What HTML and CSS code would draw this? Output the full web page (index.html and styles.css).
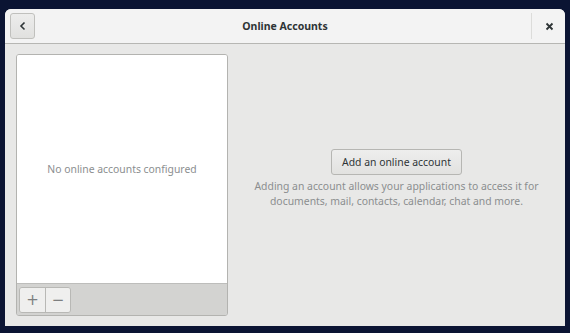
FILE: index.html
```html
<!DOCTYPE html>
<html>
<head>
    <title>Online Accounts</title>
    <link rel="stylesheet" href="styles.css">
</head>
<body>
    <div class="window">
        <div class="header">
            <button class="back-btn">
                <svg width="10" height="10" viewBox="0 0 10 10"><path d="M6.5 1.5 L3 5 L6.5 8.5" fill="none" stroke="#2e3436" stroke-width="1.6"/></svg>
            </button>
            <h1 class="title">Online Accounts</h1>
            <div class="sep"></div>
            <button class="close-btn">
                <svg width="9" height="9" viewBox="0 0 9 9"><path d="M1.5 1.5 L7.5 7.5 M7.5 1.5 L1.5 7.5" fill="none" stroke="#2e3436" stroke-width="1.8"/></svg>
            </button>
        </div>
        <div class="content">
            <div class="list-panel">
                <div class="list-body">
                    <p class="empty">No online accounts configured</p>
                </div>
                <div class="toolbar">
                    <div class="btn-group">
                        <button class="tool-btn">+</button>
                        <button class="tool-btn">&minus;</button>
                    </div>
                </div>
            </div>
            <div class="side">
                <button class="add-btn">Add an online account</button>
                <p class="desc">Adding an account allows your applications to access it for<br>documents, mail, contacts, calendar, chat and more.</p>
            </div>
        </div>
    </div>
</body>
</html>
```

FILE: styles.css
```css
body {
    margin: 0;
    padding: 9px 5px 7px;
    font-family: 'Noto Sans', 'DejaVu Sans', sans-serif;
    background: #0b1433;
    overflow: hidden;
}

.window {
    width: 560px;
    height: 317px;
    background: #e8e8e7;
    border-radius: 6px 6px 0 0;
    display: flex;
    flex-direction: column;
    overflow: hidden;
}

.header {
    height: 34px;
    background: #f3f3f3;
    border-bottom: 1px solid #b6b6b3;
    display: flex;
    align-items: center;
    padding: 0 5px;
}

.back-btn {
    width: 25px;
    height: 26px;
    margin: 0;
    padding: 0;
    border: 1px solid #c0c0bd;
    border-radius: 3px;
    background: linear-gradient(#ededec, #e1e1df);
    display: flex;
    align-items: center;
    justify-content: center;
}

.title {
    flex: 1;
    margin: 0;
    text-align: center;
    font-size: 10.5px;
    font-weight: bold;
    color: #2e3436;
    padding-left: 4px;
}

.sep {
    width: 1px;
    height: 26px;
    background: #dcdcda;
    margin-right: 6px;
}

.close-btn {
    width: 22px;
    height: 26px;
    border: none;
    background: transparent;
    padding: 0;
    display: flex;
    align-items: center;
    justify-content: center;
}

.content {
    flex: 1;
    display: flex;
    padding: 10px 0 10px 11px;
}

.list-panel {
    width: 210px;
    border: 1px solid #b3b3b0;
    border-radius: 3px;
    display: flex;
    flex-direction: column;
    overflow: hidden;
}

.list-body {
    flex: 1;
    background: #fff;
    display: flex;
    align-items: center;
    justify-content: center;
}

.empty {
    margin: 0;
    font-size: 10.4px;
    color: #8b8e8f;
}

.toolbar {
    height: 31px;
    background: #d3d3d1;
    border-top: 1px solid #bdbdbb;
    display: flex;
    align-items: center;
    padding-left: 2px;
}

.btn-group {
    display: flex;
    border: 1px solid #b8b8b5;
    border-radius: 3px;
    overflow: hidden;
}

.tool-btn {
    width: 25px;
    height: 24px;
    margin: 0;
    padding: 0;
    border: none;
    background: #efefee;
    color: #7d7f80;
    font-size: 15px;
    line-height: 24px;
    font-family: 'DejaVu Sans', sans-serif;
}

.tool-btn + .tool-btn {
    border-left: 1px solid #b8b8b5;
}

.side {
    flex: 1;
    display: flex;
    flex-direction: column;
    align-items: center;
    justify-content: center;
    padding-top: 8px;
    padding-bottom: 20px;
}

.add-btn {
    height: 26px;
    padding: 0 10px;
    border: 1px solid #b6b6b3;
    border-radius: 3px;
    background: linear-gradient(#eeeeed, #e2e2e0);
    color: #2e3436;
    font-family: 'Noto Sans', 'DejaVu Sans', sans-serif;
    font-size: 10.4px;
}

.desc {
    margin: 4px 0 0;
    text-align: center;
    font-size: 10.4px;
    line-height: 15px;
    color: #8b8e8f;
}
```
